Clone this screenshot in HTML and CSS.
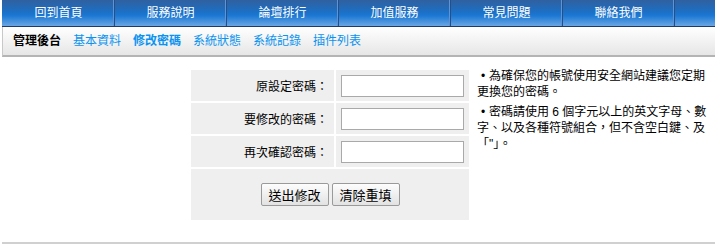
FILE: index.html
```html
<!DOCTYPE html>
<html lang="zh-Hant">
<head>
  <meta charset="UTF-8">
  <title>修改密碼</title>
  <link rel="stylesheet" href="styles.css">
</head>
<body>

<div class="topnav">
  <a href="#">回到首頁</a>
  <a href="#">服務說明</a>
  <a href="#">論壇排行</a>
  <a href="#">加值服務</a>
  <a href="#">常見問題</a>
  <a href="#">聯絡我們</a>
  <span class="filler"></span>
</div>

<div class="subnav">
  <b>管理後台</b>
  <a href="#">基本資料</a>
  <a href="#" class="current">修改密碼</a>
  <a href="#">系統狀態</a>
  <a href="#">系統記錄</a>
  <a href="#">插件列表</a>
</div>

<div class="main">
  <form class="pwform">
    <label class="cell label">原設定密碼：</label>
    <div class="cell field"><input type="password"></div>
    <label class="cell label">要修改的密碼：</label>
    <div class="cell field"><input type="password"></div>
    <label class="cell label">再次確認密碼：</label>
    <div class="cell field"><input type="password"></div>
    <div class="cell buttons">
      <button type="submit">送出修改</button>
      <button type="reset">清除重填</button>
    </div>
  </form>

  <ul class="notes">
    <li>為確保您的帳號使用安全網站建議您定期更換您的密碼。</li>
    <li>密碼請使用 6 個字元以上的英文字母、數字、以及各種符號組合，但不含空白鍵、及「"」。</li>
  </ul>
</div>

<div class="footline"></div>

</body>
</html>
```

FILE: styles.css
```css
/* General */
body {
  margin: 0 0 0 2px;
  font-family: "Liberation Sans", "Noto Sans CJK TC", sans-serif;
  font-size: 12px;
  color: #000;
  background: #fff;
}

/* Top navigation */
.topnav {
  display: flex;
  height: 26px;
  margin-left: -2px;
  padding-left: 3px;
  background: linear-gradient(#30609f 0%, #1c6fc4 45%, #1b78d4 60%, #6aa6e4 100%);
  border-bottom: 1px solid #1d3b66;
}
.topnav a {
  width: 111px;
  line-height: 26px;
  text-align: center;
  color: #fff;
  text-decoration: none;
  font-size: 12px;
  border-right: 1px solid #24508a;
  box-shadow: inset -1px 0 0 #5f94d0;
}
.topnav .filler {
  flex: 1;
}

/* Sub navigation */
.subnav {
  display: flex;
  gap: 12px;
  height: 28px;
  line-height: 28px;
  padding-left: 10px;
  border-left: 1px solid #c8c8c8;
  border-bottom: 2px solid #b4b4b4;
  background: linear-gradient(#ffffff, #e6e6e6);
}
.subnav b {
  color: #000;
}
.subnav a {
  color: #0a93f0;
  text-decoration: none;
}
.subnav a.current {
  font-weight: bold;
}

/* Main area */
.main {
  display: flex;
  align-items: flex-start;
}
.pwform {
  display: grid;
  grid-template-columns: 143px 133px;
  grid-template-rows: 31px 31px 31px 51px;
  gap: 2px;
  margin: 13px 0 0 189px;
}
.cell {
  background: #efefef;
  display: flex;
  align-items: center;
}
.label {
  justify-content: flex-end;
  padding-right: 6px;
}
.field {
  padding-left: 5px;
}
.field input {
  width: 123px;
  height: 22px;
  box-sizing: border-box;
  border: 1px solid #a9a9a9;
  margin: 0;
}
.buttons {
  grid-column: 1 / 3;
  justify-content: center;
  gap: 3px;
}
.buttons button {
  width: 68px;
  height: 23px;
  padding: 0;
  font-family: "Noto Sans CJK TC", sans-serif;
  font-size: 13px;
  color: #000;
  border: 1px solid #9a9a9a;
  border-radius: 2px;
  background: linear-gradient(#fdfdfd, #e2e2e2);
}

/* Notes */
.notes {
  list-style: none;
  margin: 11px 0 0 8px;
  padding: 0;
  width: 232px;
  line-height: 16px;
}
.notes li {
  margin-bottom: 4px;
}
.notes li::before {
  content: "•";
  display: inline-block;
  width: 12px;
  text-align: center;
}

.footline {
  margin-top: 22px;
  border-top: 2px solid #d0d0d0;
}
```
